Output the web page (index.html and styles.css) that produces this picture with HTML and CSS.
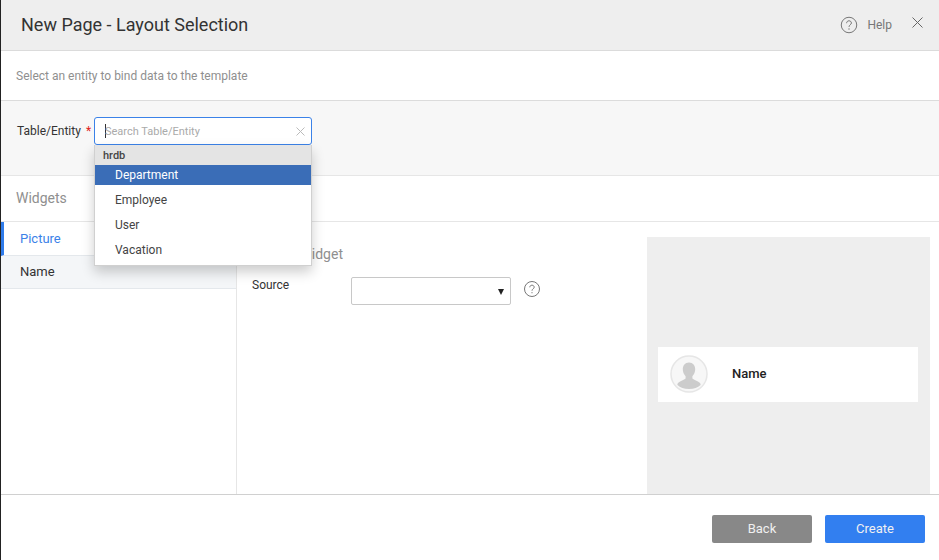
FILE: index.html
```html
<!DOCTYPE html>
<html lang="en">
	<head>
		<meta charset="UTF-8" />
		<title>New Page - Layout Selection</title>
		<link rel="stylesheet" href="styles.css">
	</head>
	<body>
		<div class="dialog">
			<div class="dialog-header">
				<h1>New Page - Layout Selection</h1>
				<div class="header-actions">
					<svg class="help-icon" width="18" height="18" viewBox="0 0 18 18"><circle cx="9" cy="9" r="7.75" fill="none" stroke="#777" stroke-width="1"/><path d="M6.6 7.2c0-1.5 1.1-2.4 2.4-2.4s2.4.9 2.4 2.2c0 1.7-2.4 1.9-2.4 3.9" fill="none" stroke="#777" stroke-width="1"/><circle cx="9" cy="13" r=".7" fill="#777"/></svg>
					<span class="help-label">Help</span>
					<svg class="close-icon" width="11" height="11" viewBox="0 0 11 11"><path d="M.5.5l10 10M10.5.5l-10 10" fill="none" stroke="#666" stroke-width="1"/></svg>
				</div>
			</div>

			<div class="dialog-intro">Select an entity to bind data to the template</div>

			<div class="entity-row">
				<label class="entity-label">Table/Entity <span class="required">*</span></label>
				<div class="search-wrap">
					<div class="search-box">
						<span class="caret"></span>
						<span class="placeholder">Search Table/Entity</span>
						<svg class="clear-icon" width="9" height="9" viewBox="0 0 9 9"><path d="M.5.5l8 8M8.5.5l-8 8" fill="none" stroke="#bbb" stroke-width="1"/></svg>
					</div>
					<ul class="dropdown">
						<li class="dropdown-group">hrdb</li>
						<li class="dropdown-item active">Department</li>
						<li class="dropdown-item">Employee</li>
						<li class="dropdown-item">User</li>
						<li class="dropdown-item">Vacation</li>
					</ul>
				</div>
			</div>

			<div class="widgets-title">Widgets</div>

			<div class="widgets-body">
				<div class="widget-list">
					<div class="widget-item selected">Picture</div>
					<div class="widget-item">Name</div>
				</div>
				<div class="widget-config">
					<h2>Picture Widget</h2>
					<div class="config-row">
						<label>Source</label>
						<div class="select-box"><span class="select-arrow"></span></div>
						<svg class="source-help" width="16" height="16" viewBox="0 0 16 16"><circle cx="8" cy="8" r="7.5" fill="none" stroke="#777" stroke-width="1"/><path d="M5.8 6.3c0-1.3 1-2.1 2.2-2.1s2.2.8 2.2 2c0 1.5-2.2 1.7-2.2 3.5" fill="none" stroke="#777" stroke-width="1"/><circle cx="8" cy="11.7" r=".6" fill="#777"/></svg>
					</div>
				</div>
				<div class="preview">
					<div class="preview-card">
						<svg class="avatar" width="38" height="38" viewBox="0 0 38 38">
							<circle cx="19" cy="19" r="18" fill="#f7f7f7" stroke="#e6e6e6" stroke-width="1.5"/>
							<path d="M19 7.5c-4 0-6.200 3-6.200 6.800 0 2.900 1.200 5.300 2.800 6.900v2.300c-1.500 1.500-5.300 2.300-7.300 4.300-.8.800-1 1.600-.8 2.200 2.600 2.600 6.500 4 11.500 4s8.900-1.400 11.500-4c.2-.6 0-1.400-.8-2.200-2-2-5.800-2.800-7.300-4.300v-2.300c1.600-1.600 2.800-4 2.800-6.900 0-3.800-2.200-6.800-6.200-6.800z" fill="#cccccc"/>
						</svg>
						<span class="preview-name">Name</span>
					</div>
				</div>
			</div>

			<div class="dialog-footer">
				<button class="btn btn-back">Back</button>
				<button class="btn btn-create">Create</button>
			</div>
		</div>
	</body>
</html>
```

FILE: styles.css
```css
* {
	box-sizing: border-box;
}
html,
body {
	margin: 0;
	height: 100%;
}
body {
	font-family: Roboto, "Liberation Sans", sans-serif;
	background-color: white;
	overflow: hidden;
}
.dialog {
	display: flex;
	flex-direction: column;
	height: 560px;
	border-left: 1px solid #222;
}
.dialog-header {
	display: flex;
	justify-content: space-between;
	align-items: center;
	height: 51px;
	padding: 0 15px 0 20px;
	background-color: #eeeeee;
	border-bottom: 1px solid #dcdcdc;
}
h1 {
	margin: 0 0 2px;
	font-size: 18px;
	font-weight: 400;
	color: #333;
}
.header-actions {
	display: flex;
	align-items: center;
	color: #777;
	font-size: 12px;
}
.help-label {
	margin-left: 9px;
	margin-right: 20px;
}
.close-icon {
	margin-bottom: 6px;
	margin-right: 1px;
}
.dialog-intro {
	display: flex;
	align-items: center;
	height: 50px;
	padding-left: 15px;
	font-size: 12px;
	color: #8f8f8f;
	border-bottom: 1px solid #dcdcdc;
	box-shadow: 0 1px 2px rgba(0, 0, 0, 0.08);
}
.entity-row {
	display: flex;
	height: 75px;
	padding: 16px 0 0 16px;
	background-color: #f7f7f7;
	border-bottom: 1px solid #e6e6e6;
}
.entity-label {
	width: 77px;
	padding-top: 7px;
	font-size: 12px;
	color: #333;
}
.required {
	color: #e02020;
	margin-left: 2px;
}
.search-wrap {
	position: relative;
	width: 218px;
}
.search-box {
	display: flex;
	align-items: center;
	height: 28px;
	padding: 0 10px;
	background-color: white;
	border: 1px solid #3b82e8;
	border-radius: 3px;
}
.caret {
	width: 1px;
	height: 14px;
	background-color: #333;
}
.placeholder {
	flex: 1;
	margin-left: -1px;
	font-size: 11px;
	color: #aaa;
}
.clear-icon {
	margin-right: -4px;
}
.dropdown {
	position: absolute;
	top: 28px;
	left: 0;
	z-index: 10;
	width: 218px;
	margin: 0;
	padding: 0 0 2px;
	list-style: none;
	background-color: white;
	border: 1px solid #d0d0d0;
	border-top: none;
	box-shadow: 0 6px 12px rgba(0, 0, 0, 0.2);
}
.dropdown-group {
	height: 20px;
	padding: 4px 0 0 8px;
	font-size: 11px;
	font-weight: 500;
	color: #444;
	background-color: #e4e4e4;
}
.dropdown-item {
	height: 25px;
	padding: 4px 0 0 20px;
	font-size: 12px;
	line-height: 16px;
	color: #444;
}
.dropdown-item.active {
	height: 20px;
	margin-bottom: 3px;
	padding-top: 2px;
	color: white;
	background-color: #3a6db7;
}
.widgets-title {
	display: flex;
	align-items: center;
	height: 46px;
	padding: 0 0 2px 15px;
	font-size: 14px;
	color: #8f8f8f;
	border-bottom: 1px solid #e6e6e6;
}
.widgets-body {
	display: flex;
	flex: 1;
	min-height: 0;
}
.widget-list {
	width: 236px;
	border-right: 1px solid #e6e6e6;
}
.widget-item {
	display: flex;
	align-items: center;
	height: 33px;
	padding: 0 0 2px 19px;
	font-size: 13px;
	color: #333;
	background-color: #f4f6f8;
	border-bottom: 1px solid #e4e8ec;
}
.widget-item.selected {
	height: 34px;
	padding: 0 0 0 16px;
	color: #3b82e8;
	background-color: white;
	border-left: 3px solid #2f7bea;
}
.widget-config {
	width: 410px;
	padding: 24px 15px 0;
}
h2 {
	margin: 0;
	font-size: 14px;
	font-weight: 400;
	color: #8f8f8f;
}
.config-row {
	display: flex;
	align-items: flex-start;
	margin-top: 15px;
	font-size: 12px;
	color: #333;
}
.config-row label {
	width: 99px;
	padding-top: 1px;
}
.select-box {
	position: relative;
	width: 160px;
	height: 28px;
	background-color: white;
	border: 1px solid #c8c8c8;
	border-radius: 2px;
}
.select-arrow {
	position: absolute;
	top: 11px;
	right: 6px;
	border-left: 3px solid transparent;
	border-right: 3px solid transparent;
	border-top: 6px solid #222;
}
.source-help {
	margin: 4px 0 0 13px;
}
.preview {
	width: 283px;
	height: 257px;
	margin-top: 15px;
	padding: 110px 11px 0;
	background-color: #eeeeee;
}
.preview-card {
	display: flex;
	align-items: center;
	width: 260px;
	height: 55px;
	padding: 0 0 2px 12px;
	background-color: white;
}
.preview-name {
	margin-left: 24px;
	font-size: 13px;
	font-weight: 500;
	color: #222;
}
.dialog-footer {
	display: flex;
	justify-content: flex-end;
	gap: 13px;
	height: 66px;
	padding: 20px 14px 0 0;
	border-top: 1px solid #d0d0d0;
}
.btn {
	width: 100px;
	height: 28px;
	padding: 0 0 1px;
	border: none;
	border-radius: 2px;
	font-family: Roboto, sans-serif;
	font-size: 13px;
	color: #f0f0f0;
	cursor: pointer;
}
.btn-back {
	background-color: #888888;
}
.btn-create {
	background-color: #327ff0;
}
```
